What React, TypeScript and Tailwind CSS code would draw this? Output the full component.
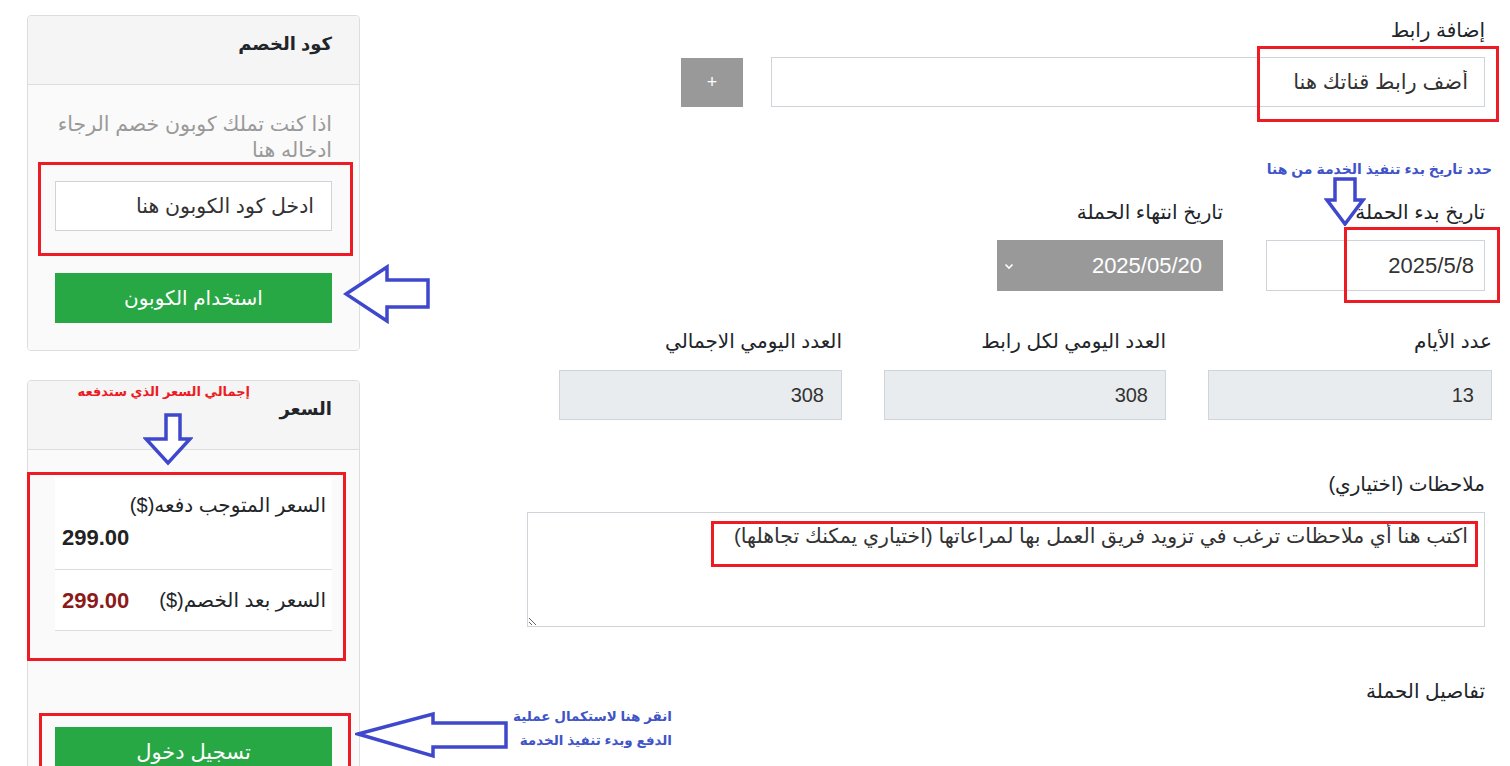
import React from 'react';

const font = { fontFamily: '"Liberation Sans", "DejaVu Sans", sans-serif' };

const Label: React.FC<{ children: React.ReactNode }> = ({ children }) => (
  <div className="text-[20px] leading-[27px] text-[#212529]">{children}</div>
);

const StatField: React.FC<{ label: string; value: string; width: string }> = ({ label, value, width }) => (
  <div className={width}>
    <Label>{label}</Label>
    <div className="mt-[15px] h-[50px] bg-[#e9ecef] border border-[#ced4da] flex items-center pr-[17px] text-[20px] text-[#333]">
      {value}
    </div>
  </div>
);

const LeftArrow: React.FC<{ className: string; w: number; h: number; points: string }> = ({ className, w, h, points }) => (
  <svg className={className} width={w} height={h} viewBox={`0 0 ${w} ${h}`}>
    <polygon points={points} fill="white" stroke="#3f48cc" strokeWidth="3.5" strokeLinejoin="miter" />
  </svg>
);

const App: React.FC = () => {
  return (
    <div dir="rtl" style={font} className="relative w-[1510px] h-[766px] overflow-hidden bg-white flex items-start">
      {/* main form */}
      <div className="w-[958px] mr-[25px] pt-[17px]">
        <Label>إضافة رابط</Label>
        <div className="mt-[13px] flex items-center gap-[28px]">
          <input
            placeholder="أضف رابط قناتك هنا"
            className="w-[714px] h-[50px] border border-[#ced4da] pr-[16px] text-[21px] outline-none placeholder:text-[#333]"
          />
          <button className="w-[62px] h-[49px] bg-[#999] text-white text-[18px]">+</button>
        </div>

        <div className="mt-[92px] flex gap-[43px]">
          <div className="w-[219px]">
            <Label>تاريخ بدء الحملة</Label>
            <div className="mt-[14px] h-[51px] border border-[#ced4da] flex items-center pr-[10px] text-[22px] text-[#333]">
              2025/5/8
            </div>
          </div>
          <div className="w-[226px]">
            <Label>تاريخ انتهاء الحملة</Label>
            <div className="mt-[14px] h-[51px] bg-[#999] flex items-center justify-between pr-[21px] pl-[6px] text-[22px] text-white">
              <span>2025/05/20</span>
              <svg width="12" height="12" viewBox="0 0 12 12">
                <path d="M2.5 4.5 L6 8 L9.5 4.5" fill="none" stroke="white" strokeWidth="1.6" />
              </svg>
            </div>
          </div>
        </div>

        <div className="mt-[37px] -mr-[7px] flex gap-[42px]">
          <StatField label="عدد الأيام" value="13" width="w-[284px]" />
          <StatField label="العدد اليومي لكل رابط" value="308" width="w-[282px]" />
          <StatField label="العدد اليومي الاجمالي" value="308" width="w-[283px]" />
        </div>

        <div className="mt-[51px]">
          <Label>ملاحظات (اختياري)</Label>
          <textarea
            placeholder="اكتب هنا أي ملاحظات ترغب في تزويد فريق العمل بها لمراعاتها (اختياري يمكنك تجاهلها)"
            className="mt-[14px] block w-full h-[115px] border border-[#ced4da] pr-[16px] pt-[10px] text-[20.5px] leading-[26px] outline-none placeholder:text-[#333]"
          />
        </div>

        <div className="mt-[51px]">
          <Label>تفاصيل الحملة</Label>
        </div>
      </div>

      {/* sidebar */}
      <div className="w-[333px] mr-[167px] pt-[15px]">
        <div className="border border-[#ddd] rounded-[4px] overflow-hidden">
          <div className="h-[69px] bg-[#f5f5f5] border-b border-[#ddd] pr-[27px] pt-[15px] text-[18px] leading-[27px] font-bold text-[#212529]">
            كود الخصم
          </div>
          <div className="bg-[#fafafa] px-[27px] pt-[26px] pb-[27px]">
            <p className="text-[20.5px] leading-[26px] text-[#999]">
              اذا كنت تملك كوبون خصم الرجاء
              <br />
              ادخاله هنا
            </p>
            <input
              placeholder="ادخل كود الكوبون هنا"
              className="mt-[18px] w-full h-[50px] bg-white border border-[#ced4da] pr-[17px] text-[20.5px] outline-none placeholder:text-[#333]"
            />
            <button className="mt-[42px] w-full h-[50px] bg-[#28a745] text-white text-[20px]">استخدام الكوبون</button>
          </div>
        </div>

        <div className="mt-[29px] border border-[#ddd] rounded-[4px] overflow-hidden">
          <div className="h-[69px] bg-[#f5f5f5] border-b border-[#ddd] pr-[27px] pt-[15px] text-[18px] leading-[27px] font-bold text-[#212529]">
            السعر
          </div>
          <div className="bg-[#fafafa] px-[27px] pt-[28px] pb-[40px]">
            <div className="bg-white">
              <div className="border-b border-[#ddd] pt-[14px] pb-[18px] pr-[6px] pl-[7px]">
                <div className="text-[20px] leading-[26px] text-[#212529]">السعر المتوجب دفعه($)</div>
                <div className="mt-[7px] text-left text-[22px] leading-[26px] font-bold text-[#222]">299.00</div>
              </div>
              <div className="h-[61px] border-b border-[#ddd] flex items-center justify-between pr-[6px] pl-[7px]">
                <span className="text-[20px] text-[#212529]">السعر بعد الخصم($)</span>
                <span className="text-[22px] font-bold text-[#8b1a1a]">299.00</span>
              </div>
            </div>
            <button className="mt-[96px] w-full h-[50px] bg-[#28a745] text-white text-[21px]">تسجيل دخول</button>
          </div>
        </div>
      </div>

      {/* annotations */}
      <div className="absolute left-[1257px] top-[46px] w-[242px] h-[76px] border-[3px] border-[#ed1c24]" />
      <div className="absolute left-[1344px] top-[227px] w-[156px] h-[76px] border-[3px] border-[#ed1c24]" />
      <div className="absolute left-[711px] top-[521px] w-[767px] h-[46px] border-[3px] border-[#ed1c24]" />
      <div className="absolute left-[38px] top-[162px] w-[315px] h-[94px] border-[3px] border-[#ed1c24]" />
      <div className="absolute left-[27px] top-[472px] w-[319px] h-[189px] border-[3px] border-[#ed1c24]" />
      <div className="absolute left-[39px] top-[713px] w-[312px] h-[70px] border-[3px] border-[#ed1c24]" />

      <div className="absolute left-[1250px] top-[159px] w-[242px] text-[14px] leading-[20px] font-bold text-[#4054c8] text-right">
        حدد تاريخ بدء تنفيذ الخدمة من هنا
      </div>
      <div className="absolute left-[60px] top-[382px] w-[190px] text-[13px] leading-[20px] font-bold text-[#ed1c24] text-right">
        إجمالي السعر الذي ستدفعه
      </div>
      <div className="absolute left-[505px] top-[705px] w-[167px] text-[13.5px] leading-[24px] font-bold text-[#4054c8] text-right">
        انقر هنا لاستكمال عملية
        <br />
        الدفع وبدء تنفيذ الخدمة
      </div>

      <svg className="absolute left-[1324px] top-[176px]" width="42" height="50" viewBox="0 0 42 50">
        <polygon points="11,3 31,3 31,24 39,24 21,48 3,24 11,24" fill="white" stroke="#3f48cc" strokeWidth="3.5" />
      </svg>
      <svg className="absolute left-[143px] top-[412px]" width="50" height="54" viewBox="0 0 50 54">
        <polygon points="23,3 37,3 37,27 47,27 25,51 3,27 23,27" fill="white" stroke="#3f48cc" strokeWidth="3.5" />
      </svg>
      <LeftArrow
        className="absolute left-[343px] top-[264px]"
        w={88}
        h={60}
        points="3,30 44,3 44,16 85,16 85,43 44,43 44,57"
      />
      <LeftArrow
        className="absolute left-[355px] top-[711px]"
        w={154}
        h={48}
        points="3,23 78,3 78,12 151,12 151,36 78,36 78,45"
      />
    </div>
  );
};

export default App;
